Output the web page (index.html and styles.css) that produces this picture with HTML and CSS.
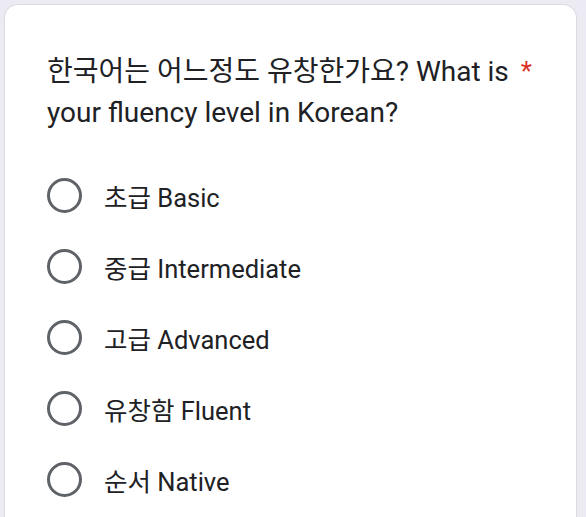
FILE: index.html
```html
<!DOCTYPE html>
<html>
  <head>
    <title>Korean fluency</title>
    <link rel="stylesheet" href="styles.css">
  </head>
  <body>
    <div class="card">
      <div class="question">
        <div class="title">한국어는 어느정도 유창한가요? What is your fluency level in Korean?</div>
        <span class="required">*</span>
      </div>
      <div class="options">
        <label class="option"><span class="radio"></span><span class="label">초급 Basic</span></label>
        <label class="option"><span class="radio"></span><span class="label">중급 Intermediate</span></label>
        <label class="option"><span class="radio"></span><span class="label">고급 Advanced</span></label>
        <label class="option"><span class="radio"></span><span class="label">유창함 Fluent</span></label>
        <label class="option"><span class="radio"></span><span class="label">순서 Native</span></label>
      </div>
    </div>
  </body>
</html>
```

FILE: styles.css
```css
body {
  margin: 0;
  padding: 4px 9px 0 4px;
  background-color: #ecebf4;
  font-family: Roboto, "Noto Sans CJK KR", sans-serif;
  color: #202124;
}

.card {
  background-color: #fff;
  border: 1px solid #dadce0;
  border-bottom: none;
  border-radius: 14px 14px 0 0;
  padding: 46px 44px 40px 42px;
  height: 520px;
  box-sizing: border-box;
}

.question {
  display: flex;
  align-items: flex-start;
}

.title {
  flex: 1;
  font-size: 28px;
  line-height: 41px;
}

.required {
  color: #d93025;
  font-size: 26px;
  line-height: 41px;
  padding-left: 8px;
}

.options {
  margin-top: 44px;
  display: flex;
  flex-direction: column;
  gap: 35px;
}

.option {
  display: flex;
  align-items: center;
  gap: 22px;
  height: 36px;
}

.radio {
  width: 29px;
  height: 29px;
  border: 3px solid #5f6368;
  border-radius: 50%;
  flex-shrink: 0;
}

.label {
  font-size: 25.5px;
}
```
